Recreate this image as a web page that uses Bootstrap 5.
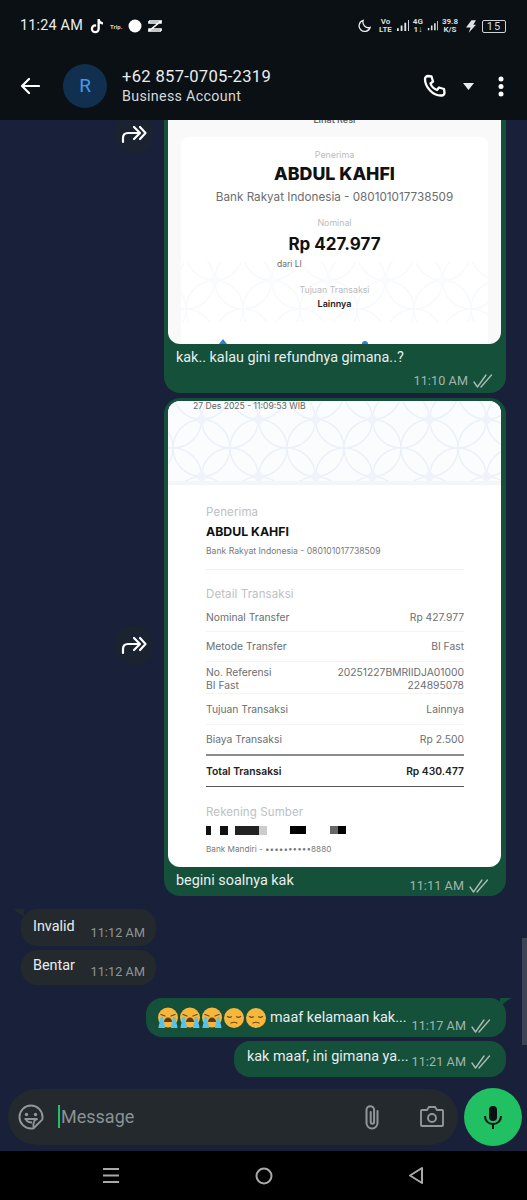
<!DOCTYPE html>
<html lang="en">
  <head>
    <meta charset="UTF-8" />
    <meta name="viewport" content="width=device-width, initial-scale=1" />
    <title>Chat</title>
    <link href="https://cdn.jsdelivr.net/npm/bootstrap@5.3.0/dist/css/bootstrap.min.css" rel="stylesheet" />
    <style>
      body { background: #192039; font-family: Roboto, "Liberation Sans", sans-serif; }
      .phone { width: 527px; height: 1200px; overflow: hidden; position: relative; }

      .top-area { background: #0b1014; height: 120px; flex: none; color: #e9edef; }
      .status-row { height: 52px; padding: 0 21px 0 20px; }
      .clock { font-size: 14.4px; line-height: 1; letter-spacing: .2px; margin-right: 1px; }
      .left-status { gap: 6px; }
      .right-status { gap: 4px; }
      .trip-txt { font-size: 6px; font-weight: 700; color: #cfd3d6; }
      .tiny-stack { font-size: 8px; line-height: 8px; font-weight: 700; text-align: center; color: #d8dbdd; }
      .batt { width: 24px; height: 13px; border: 1px solid #cfd3d6; border-radius: 2px; font-size: 11px; line-height: 11px; text-align: center; color: #d8dbdd; letter-spacing: 1px; margin-left: 2px; }
      .head-row { height: 68px; padding: 0 23px 0 20px; }
      .avatar { width: 44px; height: 44px; border-radius: 50%; background: #11304f; color: #4a97e8; font-size: 19px; margin: 0 15px 0 23px; }
      .contact-name { font-size: 16.6px; line-height: 20px; letter-spacing: .3px; }
      .contact-sub { font-size: 14.3px; line-height: 18px; color: #d5d9db; letter-spacing: .3px; }

      .chat-area { flex: 1 1 auto; min-height: 0; overflow: hidden; padding-right: 21px; }
      .fwd-btn { width: 40px; height: 40px; border-radius: 50%; background: #1b2230; flex: none; margin-right: 10px; }
      .fwd-top { margin-top: -6px; }
      .bubble-out { background: #14503a; color: #e9edef; border-radius: 16px; position: relative; }
      .bubble-in { background: #23292c; color: #e9edef; border-radius: 16px; position: relative; margin-left: 21px; }
      .bubble-first { width: 342px; height: 273px; border-radius: 0 0 16px 16px; padding: 0 5px 0 4px; }
      .bubble-second { width: 342px; height: 498px; margin-top: 5px; padding: 3px 5px 0 4px; }
      .msg-txt { font-size: 14.4px; line-height: 20px; white-space: nowrap; }
      .msg-time { font-size: 12.6px; line-height: 16px; color: #a3b5ad; letter-spacing: .1px; white-space: nowrap; }
      .msg-time-in { color: #8f9699; margin-top: 8px; }
      .caption-row { padding: 4px 8px 0 8px; }
      .time-row { padding: 5px 8px 0 0; gap: 5px; }
      .row-second-caption { padding: 4px 12px 0 8px; }
      .second-time { margin-top: 7px; gap: 5px; }

      .in-one { width: 135px; height: 37px; margin-top: 13px; padding: 8px 11px 0 12px; }
      .in-two { width: 135px; height: 35px; margin-top: 4px; padding: 6px 11px 0 12px; }
      .in-one::before { content: ""; position: absolute; left: -8px; top: 0; border-top: 8px solid #23292c; border-left: 11px solid transparent; }
      .out-one { height: 39px; margin-top: 13px; padding: 0 15px 0 11px; width: 360px; }
      .out-one::after { content: ""; position: absolute; right: -5px; top: 0; border-top: 8px solid #14503a; border-right: 11px solid transparent; }
      .out-two { height: 36px; margin-top: 4px; padding: 0 15px 0 13px; width: 272px; }
      .out-two-txt { margin-bottom: 4px; }
      .tail-one { align-self: flex-end; margin-bottom: 3px; gap: 5px; }
      .tail-two { align-self: flex-end; margin-bottom: 7px; gap: 5px; }
      .emoji-gap { margin-left: 3px; }

      .shot { background: #fff; overflow: hidden; color: #5f6368; font-family: Inter, "Liberation Sans", sans-serif; }
      .shot-a { height: 224px; background: #f9f9fa; border-radius: 0 0 12px 12px; padding: 17px 13px 0 13px; position: relative; }
      .shot-b { height: 466px; border-radius: 12px; }
      .clip-txt { position: absolute; left: 0; right: 0; top: -6px; font-size: 9px; line-height: 11px; font-weight: 600; color: #666; }
      .inner-card { background: #fff; border-radius: 8px 8px 0 0; height: 207px; position: relative; overflow: hidden; }
      .inner-pattern { position: absolute; left: 0; right: 0; top: 125px; }
      .inner-marks { position: absolute; left: 0; bottom: 0; }
      .inner-body { position: relative; padding-top: 12px; }
      .lbl-light { font-size: 8.8px; line-height: 12px; color: #b9bcc0; }
      .big-name { font-size: 17.8px; line-height: 24px; font-weight: 800; color: #111; margin-top: 1px; }
      .bank-line { font-size: 11.7px; line-height: 18px; color: #6a6d70; margin-top: 2px; }
      .big-amt { font-size: 17px; line-height: 24px; font-weight: 700; color: #111; margin-top: 3px; }
      .dari-row { font-size: 8.5px; line-height: 12px; color: #6a6d70; padding-left: 96px; margin-top: 2px; }
      .lainnya { font-size: 9px; line-height: 12px; font-weight: 600; color: #222; margin-top: 2px; }
      .lbl-mid2 { margin-top: 11px; }
      .lbl-mid3 { margin-top: 14px; }

      .pat-band { height: 80px; background: #fbfcfe; border-bottom: 4px solid #f4f5f6; position: relative; box-sizing: content-box; }
      .date-txt { position: absolute; left: 25px; top: 0; font-size: 8.6px; line-height: 11px; color: #666; }
      .receipt-body { padding: 19px 37px 0 38px; }
      .rc-small-title { font-size: 11.5px; line-height: 16px; color: #bcbfc3; letter-spacing: .1px; }
      .rc-name { font-size: 12.3px; line-height: 16px; font-weight: 700; color: #111; margin-top: 4px; }
      .rc-bank { font-size: 8.6px; line-height: 12px; color: #77797c; margin-top: 5px; padding-bottom: 12px; border-bottom: 1px solid #f0f1f2; }
      .rc-detail { margin-top: 16px; }
      .rc-row { font-size: 10.3px; line-height: 13px; color: #6b6e71; border-bottom: 1px solid #f3f4f5; }
      .rc-h-a { height: 31px; padding-top: 3px; align-items: center; margin-top: -1px; }
      .rc-h-b { height: 30px; }
      .rc-h-c { height: 32px; padding-top: 4px; }
      .rc-h-d { height: 31px; }
      .rc-thick { border-bottom: 2px solid #8a8c8f; }
      .rc-total { border-bottom: 1px solid #55585b; color: #222; font-weight: 600; }
      .rc-src { margin-top: 17px; }
      .rc-redact { display: block; margin-top: 6px; }
      .rc-mandiri { font-size: 8.2px; line-height: 11px; color: #77797c; margin-top: 8px; }

      .input-row { height: 63px; flex: none; padding: 0 5px 6px 8px; }
      .msg-pill { background: #23292c; height: 56px; width: 450px; border-radius: 28px; padding: 0 14px 0 10px; }
      .caret-bar { width: 2px; height: 23px; background: #21c063; margin: 0 1px 0 14px; }
      .msg-ph { font-size: 18px; color: #8a9297; }
      .attach-gap { margin-right: 40px; }
      .mic-btn { width: 58px; height: 58px; border-radius: 50%; background: #21c063; flex: none; }

      .nav-row { background: #000; height: 49px; flex: none; padding: 0 103px 0 102px; }
      .scroll-thumb { position: absolute; right: 0; top: 938px; width: 5px; height: 107px; background: #3c4354; }
    </style>
  </head>
  <body>
    <svg width="0" height="0" class="position-absolute">
      <defs>
        <pattern id="kawung" width="57" height="57" patternUnits="userSpaceOnUse" patternTransform="translate(5 -10)">
          <circle cx="0" cy="28.500" r="28.500" fill="none" stroke="#ebf1f8" stroke-width="1.500" />
          <circle cx="57" cy="28.500" r="28.500" fill="none" stroke="#ebf1f8" stroke-width="1.500" />
          <circle cx="28.500" cy="0" r="28.500" fill="none" stroke="#ebf1f8" stroke-width="1.500" />
          <circle cx="28.500" cy="57" r="28.500" fill="none" stroke="#ebf1f8" stroke-width="1.500" />
          <path d="M28.500 22l6 6.500-6 6.500-6-6.500z" fill="#f0f4fa" />
        </pattern>
        <symbol id="fwd" viewBox="0 0 26 20">
          <path d="M2 18v-4c0-3 2-5 5-5h11M13 3l6 6-6 6M19 3l5.500 6-5.500 6" fill="none" stroke="#fff" stroke-width="2.200" stroke-linecap="round" stroke-linejoin="round" />
        </symbol>
        <symbol id="ticks" viewBox="0 0 20 14">
          <path d="M1 8l3.500 5L13 1M8 13L18.500 1" fill="none" stroke="#a9bbb2" stroke-width="1.400" stroke-linecap="round" stroke-linejoin="round" />
        </symbol>
        <symbol id="cry" viewBox="0 0 22 22">
          <circle cx="11" cy="10.500" r="10" fill="#f6b73c" />
          <path d="M4 7.500l4 1.500M18 7.500l-4 1.500" stroke="#6b4a1c" stroke-width="1.300" stroke-linecap="round" />
          <path d="M7 15c0-3 2-4.500 4-4.500s4 1.500 4 4.500z" fill="#5d3a1a" />
          <path d="M1.500 21c0-3 1.500-5 2-11h2.500c.5 6 2 8 2 11zM14 21c0-3 1.500-5 2-11h2.500c.5 6 2 8 2 11z" fill="#58c3e8" />
        </symbol>
        <symbol id="sad" viewBox="0 0 22 22">
          <circle cx="11" cy="11" r="10" fill="#f6b73c" />
          <path d="M4.500 9.500q2 1.500 4 .3M17.500 9.500q-2 1.500-4 .3M8 16q3-1.500 6 0" fill="none" stroke="#6b4a1c" stroke-width="1.200" stroke-linecap="round" />
        </symbol>
      </defs>
    </svg>

    <div class="phone d-flex flex-column">
      <div class="top-area">
        <div class="status-row d-flex align-items-center justify-content-between">
          <div class="d-flex align-items-center left-status">
            <span class="clock">11:24 AM</span>
            <svg width="14" height="16" viewBox="0 0 14 16"><path d="M7.500 1h2.300c.2 1.800 1.300 3 3.200 3.200v2.300c-1.200 0-2.300-.4-3.200-1v5.300a4.500 4.500 0 1 1-4.500-4.500l.8.100v2.400a2.200 2.200 0 1 0 1.400 2z" fill="#fff" /></svg>
            <span class="trip-txt">Trip.</span>
            <svg width="14" height="14" viewBox="0 0 14 14"><circle cx="7" cy="7" r="6.500" fill="#fff" /></svg>
            <svg width="14" height="12" viewBox="0 0 14 12"><path d="M1 1h12L1 11h12M1 1v2h12V1M1 11V9h12v2" fill="none" stroke="#fff" stroke-width="1.600" /></svg>
          </div>
          <div class="d-flex align-items-center right-status">
            <svg class="me-1" width="13" height="14" viewBox="0 0 15 15"><path d="M6 1a6.500 6.500 0 1 0 8 8.200A6.500 6.500 0 0 1 6 1z" fill="none" stroke="#e9edef" stroke-width="1.500" /></svg>
            <div class="tiny-stack">Vo<br />LTE</div>
            <svg width="13" height="12" viewBox="0 0 14 13"><path d="M1 9h2v3H1zM5 6h2v6H5zM9 3h2v9H9zM13 0h1v12h-1z" fill="#e0e3e5" /></svg>
            <div class="tiny-stack">4G<br />1↓</div>
            <svg width="11" height="12" viewBox="0 0 14 13"><path d="M1 9h2v3H1zM5 6h2v6H5zM9 3h2v9H9zM13 0h1v12h-1z" fill="#e0e3e5" /></svg>
            <div class="tiny-stack">39.8<br />K/S</div>
            <svg class="ms-1" width="10" height="13" viewBox="0 0 11 14"><path d="M6 0h5L8 5h3L3 14l2-6H0z" fill="#e0e3e5" /></svg>
            <div class="batt">15</div>
          </div>
        </div>
        <div class="head-row d-flex align-items-center">
          <svg width="20" height="18" viewBox="0 0 20 18"><path d="M19 9H2M9 2L2 9l7 7" fill="none" stroke="#fff" stroke-width="2.200" stroke-linecap="round" stroke-linejoin="round" /></svg>
          <div class="avatar d-flex align-items-center justify-content-center">R</div>
          <div class="flex-grow-1">
            <div class="contact-name">+62 857-0705-2319</div>
            <div class="contact-sub">Business Account</div>
          </div>
          <svg width="24" height="24" viewBox="0 0 24 24"><path d="M5 2l3.500.5 1.500 5-2.500 2c1 3 3.500 5.500 6.500 6.500l2-2.500 5 1.500.5 3.500c0 1.500-1 3-3 3C10 22 2 13 2 5c0-2 1.500-3 3-3z" fill="none" stroke="#fff" stroke-width="2.300" stroke-linejoin="round" /></svg>
          <svg class="ms-3" width="11" height="7" viewBox="0 0 11 7"><path d="M0 0h11L5.500 7z" fill="#e9edef" /></svg>
          <svg class="ms-4" width="6" height="21" viewBox="0 0 6 21"><circle cx="3" cy="3" r="2.500" fill="#fff" /><circle cx="3" cy="10.500" r="2.500" fill="#fff" /><circle cx="3" cy="18" r="2.500" fill="#fff" /></svg>
        </div>
      </div>

      <div class="chat-area d-flex flex-column">
        <div class="d-flex justify-content-end align-items-start">
          <div class="fwd-btn fwd-top d-flex align-items-center justify-content-center"><svg width="26" height="20"><use href="#fwd" /></svg></div>
          <div class="bubble-out bubble-first">
            <div class="shot shot-a">
              <div class="clip-txt text-center">Lihat Resi</div>
              <div class="inner-card text-center">
                <svg class="inner-pattern" width="100%" height="60"><rect width="100%" height="60" fill="url(#kawung)" opacity=".4" /></svg>
                <svg class="inner-marks" width="307" height="6" viewBox="0 0 307 6"><path d="M38 6l4-5 4 5zM181 6a3 3 0 0 1 6 0z" fill="#2d7fe0" /></svg>
                <div class="inner-body">
                  <div class="lbl-light">Penerima</div>
                  <div class="big-name">ABDUL KAHFI</div>
                  <div class="bank-line">Bank Rakyat Indonesia - 080101017738509</div>
                  <div class="lbl-light lbl-mid2">Nominal</div>
                  <div class="big-amt">Rp 427.977</div>
                  <div class="dari-row text-start">dari LI</div>
                  <div class="lbl-light lbl-mid3">Tujuan Transaksi</div>
                  <div class="lainnya">Lainnya</div>
                </div>
              </div>
            </div>
            <div class="caption-row msg-txt">kak.. kalau gini refundnya gimana..?</div>
            <div class="time-row d-flex justify-content-end align-items-center">
              <span class="msg-time">11:10 AM</span>
              <svg width="20" height="14"><use href="#ticks" /></svg>
            </div>
          </div>
        </div>

        <div class="d-flex justify-content-end align-items-center">
          <div class="fwd-btn d-flex align-items-center justify-content-center"><svg width="26" height="20"><use href="#fwd" /></svg></div>
          <div class="bubble-out bubble-second">
            <div class="shot shot-b">
              <div class="pat-band">
                <svg width="100%" height="80" class="d-block"><rect width="100%" height="80" fill="url(#kawung)" /></svg>
                <div class="date-txt">27 Des 2025 - 11:09:53 WIB</div>
              </div>
              <div class="receipt-body">
                <div class="rc-small-title">Penerima</div>
                <div class="rc-name">ABDUL KAHFI</div>
                <div class="rc-bank">Bank Rakyat Indonesia - 080101017738509</div>
                <div class="rc-small-title rc-detail">Detail Transaksi</div>
                <div class="rc-row rc-h-a d-flex justify-content-between"><span>Nominal Transfer</span><span>Rp 427.977</span></div>
                <div class="rc-row rc-h-b d-flex justify-content-between align-items-center"><span>Metode Transfer</span><span>BI Fast</span></div>
                <div class="rc-row rc-h-c d-flex justify-content-between"><span>No. Referensi<br />BI Fast</span><span class="text-end">20251227BMRIIDJA01000<br />224895078</span></div>
                <div class="rc-row rc-h-d d-flex justify-content-between align-items-center"><span>Tujuan Transaksi</span><span>Lainnya</span></div>
                <div class="rc-row rc-h-d rc-thick d-flex justify-content-between align-items-center"><span>Biaya Transaksi</span><span>Rp 2.500</span></div>
                <div class="rc-row rc-h-d rc-total d-flex justify-content-between align-items-center"><span>Total Transaksi</span><span>Rp 430.477</span></div>
                <div class="rc-small-title rc-src">Rekening Sumber</div>
                <svg class="rc-redact" width="145" height="10" viewBox="0 0 145 10">
                  <rect width="5" height="9" fill="#111" /><rect x="14" width="8" height="9" fill="#111" />
                  <rect x="29" width="24" height="9" fill="#222" /><rect x="53" width="8" height="9" fill="#ccc" />
                  <rect x="84" width="16" height="8" fill="#000" /><rect x="124" width="8" height="8" fill="#666" /><rect x="132" width="8" height="8" fill="#000" />
                </svg>
                <div class="rc-mandiri">Bank Mandiri - ••••••••••8880</div>
              </div>
            </div>
            <div class="row-second-caption d-flex justify-content-between align-items-start">
              <span class="msg-txt">begini soalnya kak</span>
              <span class="d-flex align-items-center second-time"><span class="msg-time">11:11 AM</span><svg width="20" height="14"><use href="#ticks" /></svg></span>
            </div>
          </div>
        </div>

        <div class="bubble-in in-one d-flex justify-content-between">
          <span class="msg-txt">Invalid</span><span class="msg-time msg-time-in">11:12 AM</span>
        </div>
        <div class="bubble-in in-two d-flex justify-content-between">
          <span class="msg-txt">Bentar</span><span class="msg-time msg-time-in">11:12 AM</span>
        </div>

        <div class="bubble-out out-one align-self-end d-flex justify-content-between align-items-center">
          <span class="msg-txt d-flex align-items-center">
            <svg width="22" height="22"><use href="#cry" /></svg><svg width="22" height="22"><use href="#cry" /></svg><svg width="22" height="22"><use href="#cry" /></svg><svg width="22" height="22"><use href="#sad" /></svg><svg width="22" height="22"><use href="#sad" /></svg>
            <span class="emoji-gap">maaf kelamaan kak...</span>
          </span>
          <span class="d-flex align-items-center tail-one"><span class="msg-time">11:17 AM</span><svg width="20" height="14"><use href="#ticks" /></svg></span>
        </div>
        <div class="bubble-out out-two align-self-end d-flex justify-content-between align-items-center">
          <span class="msg-txt out-two-txt">kak maaf, ini gimana ya...</span>
          <span class="d-flex align-items-center tail-two"><span class="msg-time">11:21 AM</span><svg width="20" height="14"><use href="#ticks" /></svg></span>
        </div>
      </div>

      <div class="input-row d-flex align-items-center justify-content-between">
        <div class="msg-pill d-flex align-items-center">
          <svg width="26" height="26" viewBox="0 0 26 26"><path d="M13 1.500a11.500 11.500 0 0 1 11.500 11.500c0 1-.1 1.800-.3 2.600L15.500 24.300c-.8.200-1.600.2-2.500.2a11.500 11.500 0 0 1 0-23z" fill="none" stroke="#8f979b" stroke-width="2" /><circle cx="8.500" cy="10.500" r="1.700" fill="#8f979b" /><circle cx="17.500" cy="10.500" r="1.700" fill="#8f979b" /><path d="M6.500 15h13l-3 1.500c-1 2-1.500 4-1 7M8 16c1.500 2 3.500 2.500 6 2.500" fill="none" stroke="#8f979b" stroke-width="1.800" /></svg>
          <span class="caret-bar"></span>
          <span class="msg-ph flex-grow-1">Message</span>
          <svg class="attach-gap" width="16" height="26" viewBox="0 0 16 26"><path d="M13.500 7v12a5.500 5.500 0 0 1-11 0V6a3.800 3.800 0 0 1 7.600 0v12a1.700 1.700 0 0 1-3.400 0V8" fill="none" stroke="#8f979b" stroke-width="2" stroke-linecap="round" /></svg>
          <svg width="24" height="21" viewBox="0 0 24 21"><path d="M2 4h5l2-3h6l2 3h5a1 1 0 0 1 1 1v14a1 1 0 0 1-1 1H2a1 1 0 0 1-1-1V5a1 1 0 0 1 1-1z" fill="none" stroke="#8f979b" stroke-width="1.900" /><circle cx="12" cy="12" r="4" fill="none" stroke="#8f979b" stroke-width="1.900" /></svg>
        </div>
        <div class="mic-btn d-flex align-items-center justify-content-center">
          <svg width="20" height="24" viewBox="0 0 20 24"><rect x="6" y="1" width="8" height="15" rx="4" fill="#0b1014" /><path d="M2 11c0 5 3.500 8 8 8s8-3 8-8M10 19v5" fill="none" stroke="#0b1014" stroke-width="2" /></svg>
        </div>
      </div>

      <div class="nav-row d-flex align-items-center justify-content-between">
        <svg width="18" height="17" viewBox="0 0 18 17"><path d="M1 2h16M1 8.500h16M1 15h16" stroke="#a9a9a9" stroke-width="2" /></svg>
        <svg width="18" height="18" viewBox="0 0 18 18"><circle cx="9" cy="9" r="7.500" fill="none" stroke="#a9a9a9" stroke-width="2" /></svg>
        <svg width="16" height="19" viewBox="0 0 16 19"><path d="M14 2L2 9.500 14 17z" fill="none" stroke="#a9a9a9" stroke-width="2" stroke-linejoin="round" /></svg>
      </div>

      <div class="scroll-thumb"></div>
    </div>

    <script src="https://cdn.jsdelivr.net/npm/bootstrap@5.3.0/dist/js/bootstrap.bundle.min.js"></script>
  </body>
</html>
